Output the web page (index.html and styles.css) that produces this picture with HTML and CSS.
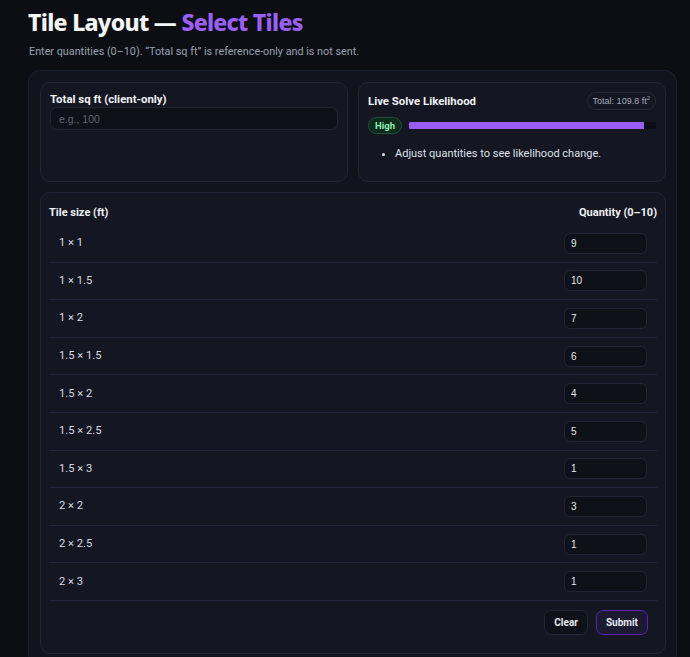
FILE: index.html
```html
<!DOCTYPE html>
<html lang="en">
<head>
<meta charset="utf-8">
<title>Tile Layout — Select Tiles</title>
<link rel="stylesheet" href="styles.css">
</head>
<body>
<main class="page">
  <h1 class="title">Tile Layout — <span class="accent">Select Tiles</span></h1>
  <p class="subtitle">Enter quantities (0–10). “Total sq ft” is reference-only and is not sent.</p>

  <section class="shell">
    <div class="top-grid">
      <div class="card">
        <label class="label" for="total">Total sq ft (client-only)</label>
        <input id="total" class="field" type="text" placeholder="e.g., 100">
      </div>
      <div class="card">
        <div class="card-head">
          <span class="label">Live Solve Likelihood</span>
          <span class="pill">Total: 109.8 ft<sup>2</sup></span>
        </div>
        <div class="meter-row">
          <span class="badge">High</span>
          <div class="meter"><div class="meter-fill" style="width:95%"></div></div>
        </div>
        <ul class="notes">
          <li>Adjust quantities to see likelihood change.</li>
        </ul>
      </div>
    </div>

    <div class="card table-card">
      <table class="tiles">
        <thead>
          <tr><th class="th-left">Tile size (ft)</th><th class="th-right">Quantity (0–10)</th></tr>
        </thead>
        <tbody>
          <tr><td>1 × 1</td><td class="qty"><input class="qty-field" type="text" value="9"></td></tr>
          <tr><td>1 × 1.5</td><td class="qty"><input class="qty-field" type="text" value="10"></td></tr>
          <tr><td>1 × 2</td><td class="qty"><input class="qty-field" type="text" value="7"></td></tr>
          <tr><td>1.5 × 1.5</td><td class="qty"><input class="qty-field" type="text" value="6"></td></tr>
          <tr><td>1.5 × 2</td><td class="qty"><input class="qty-field" type="text" value="4"></td></tr>
          <tr><td>1.5 × 2.5</td><td class="qty"><input class="qty-field" type="text" value="5"></td></tr>
          <tr><td>1.5 × 3</td><td class="qty"><input class="qty-field" type="text" value="1"></td></tr>
          <tr><td>2 × 2</td><td class="qty"><input class="qty-field" type="text" value="3"></td></tr>
          <tr><td>2 × 2.5</td><td class="qty"><input class="qty-field" type="text" value="1"></td></tr>
          <tr><td>2 × 3</td><td class="qty"><input class="qty-field" type="text" value="1"></td></tr>
        </tbody>
      </table>
      <div class="actions">
        <button class="btn btn-clear" type="button">Clear</button>
        <button class="btn btn-submit" type="button">Submit</button>
      </div>
    </div>
  </section>
</main>
</body>
</html>
```

FILE: styles.css
```css
* { box-sizing: border-box; }

html, body {
  margin: 0;
  background: #0d0e13;
  color: #e6e8ee;
  font-family: Roboto, "Noto Sans", sans-serif;
}

.page {
  padding: 0 13px 0 28px;
}

.title {
  margin: 0;
  padding-top: 7px;
  font-family: "Noto Sans", sans-serif;
  font-size: 23px;
  line-height: 30px;
  font-weight: 800;
  color: #f4f5f8;
  letter-spacing: -0.7px;
}

.accent { color: #9a60f5; }

.subtitle {
  margin: 6px 0 0 1px;
  font-size: 10.8px;
  line-height: 18px;
  color: #98a1b3;
}

.shell {
  margin-top: 9px;
  background: #12141d;
  border: 1px solid #1d2030;
  border-radius: 12px;
  padding: 11px 10px 11px 11px;
}

.top-grid {
  display: grid;
  grid-template-columns: 1fr 1fr;
  gap: 10px;
}

.card {
  background: #141622;
  border: 1px solid #222536;
  border-radius: 10px;
  padding: 9px 9px;
}

.label {
  display: block;
  font-size: 11.4px;
  font-weight: 700;
  color: #f1f2f6;
  line-height: 15px;
}

.field {
  display: block;
  width: 100%;
  height: 23px;
  margin-top: 0;
  background: #0f1118;
  border: 1px solid #222536;
  border-radius: 7px;
  padding: 0 8px;
  font-family: "Liberation Sans", Arial, sans-serif;
  font-size: 10.5px;
  color: #d8dbe3;
  outline: none;
}
.field::placeholder { color: #5d6373; }

.card-head {
  display: flex;
  justify-content: space-between;
  align-items: center;
}

.pill {
  font-family: "Liberation Sans", Arial, sans-serif;
  font-size: 9px;
  color: #a3aab9;
  border: 1px solid #262a3a;
  border-radius: 9px;
  padding: 3px 5px;
  line-height: 10px;
}
.pill sup { font-size: 6px; line-height: 0; }

.meter-row {
  display: flex;
  align-items: center;
  gap: 7px;
  margin-top: 7px;
}

.badge {
  font-size: 9.5px;
  font-weight: 700;
  color: #8ff0b0;
  background: #0e2a1e;
  border: 1px solid #1c5236;
  border-radius: 9px;
  padding: 0 6px;
  line-height: 15px;
}

.meter {
  flex: 1;
  height: 7px;
  background: #0c0e15;
  border-radius: 1px;
  overflow: hidden;
}
.meter-fill {
  height: 100%;
  background: #9a5cf4;
}

.notes {
  margin: 12px 0 10px;
  padding-left: 27px;
  font-size: 11px;
  color: #dfe2ea;
  line-height: 16px;
}

.table-card {
  margin-top: 10px;
  padding: 8px 8px 8px 8px;
}

.tiles {
  width: 100%;
  border-collapse: collapse;
}

.tiles th {
  font-size: 11px;
  font-weight: 700;
  color: #f1f2f6;
  padding: 4px 0 5px;
  line-height: 15px;
}
.th-left { text-align: left; }
.th-right { text-align: right; }

.tiles td {
  font-size: 11.2px;
  color: #d8dbe3;
  padding: 7.8px 10px;
  border-bottom: 1px solid #23263a;
  line-height: 16px;
}

.qty { text-align: right; width: 110px; }

.qty-field {
  display: inline-block;
  width: 83px;
  height: 21px;
  vertical-align: middle;
  background: #0f1118;
  border: 1px solid #222536;
  border-radius: 6px;
  padding: 0 6px;
  font-family: "Liberation Sans", Arial, sans-serif;
  font-size: 10px;
  color: #e6e8ee;
  outline: none;
}

.actions {
  display: flex;
  justify-content: flex-end;
  gap: 8px;
  padding: 9px 9px 10px;
}

.btn {
  height: 25px;
  padding: 0 9px;
  border-radius: 7px;
  font-family: Roboto, sans-serif;
  font-size: 10px;
  font-weight: 700;
  color: #e6e8ee;
  cursor: pointer;
}
.btn-clear {
  background: #0f1118;
  border: 1px solid #23263a;
}
.btn-submit {
  background: #1c1a31;
  border: 1px solid #5a22b8;
}
```
